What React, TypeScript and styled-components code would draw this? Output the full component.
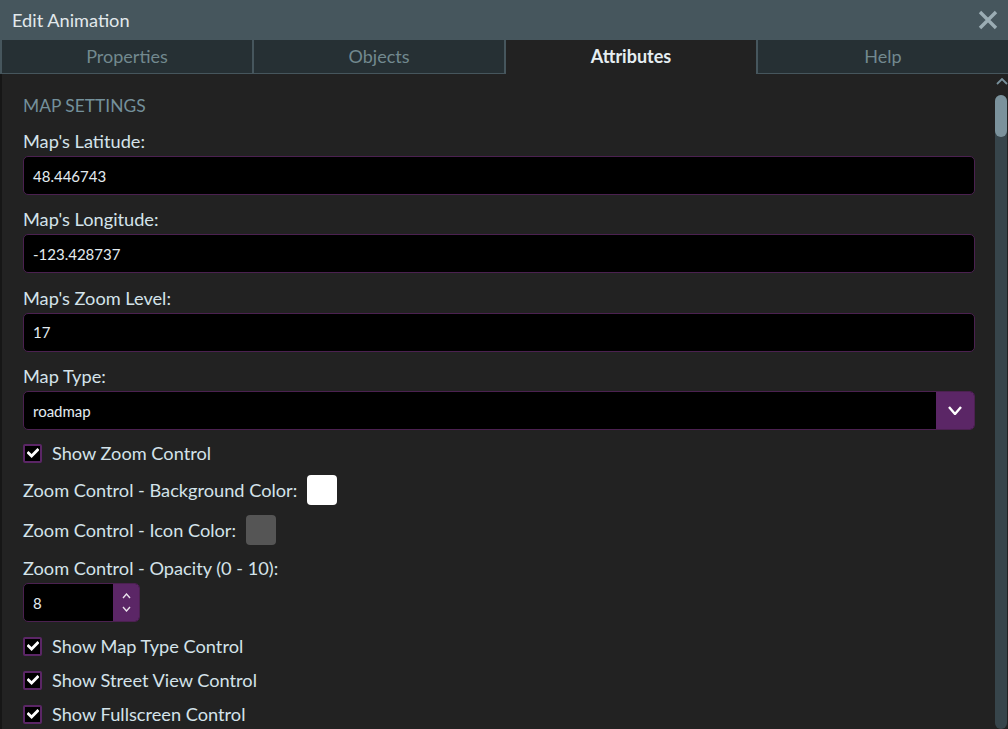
import React from "react";
import styled, { createGlobalStyle } from "styled-components";

const GlobalStyle = createGlobalStyle`
  html, body { margin: 0; padding: 0; background: #222222; overflow: hidden; }
  * { box-sizing: border-box; }
  body { font-family: Lato, "Open Sans", sans-serif; }
`;

const Window = styled.div`
  width: 1008px;
  height: 729px;
  display: flex;
  flex-direction: column;
  background: #222222;
  overflow: hidden;
`;

const TitleBar = styled.div`
  height: 40px;
  flex: none;
  display: flex;
  align-items: center;
  justify-content: space-between;
  padding: 0 9px 0 12px;
  background: #46565d;
`;

const Title = styled.div`
  font-size: 18.2px;
  color: #e2e9ec;
`;

const CloseButton = styled.div`
  width: 22px;
  height: 22px;
  display: flex;
  align-items: center;
  justify-content: center;
  color: #9badb4;
`;

const TabBar = styled.div`
  height: 34px;
  flex: none;
  display: flex;
  align-items: flex-start;
  gap: 2px;
  padding-left: 2px;
  background: #46565d;
`;

const Tab = styled.div<{ $active?: boolean }>`
  flex: 1;
  height: ${(p) => (p.$active ? "34px" : "33px")};
  line-height: 33px;
  text-align: center;
  font-size: 18px;
  font-weight: ${(p) => (p.$active ? 700 : 400)};
  color: ${(p) => (p.$active ? "#e6eef2" : "#72898f")};
  background: ${(p) => (p.$active ? "#222222" : "#263034")};
`;

const Body = styled.div`
  flex: 1;
  display: flex;
  min-height: 0;
  overflow: hidden;
  border-left: 2px solid #161616;
`;

const Content = styled.div`
  flex: 1;
  padding: 20px 20px 0 21px;
  overflow: hidden;
  color: #d4e3ea;
  font-size: 18.2px;
`;

const Heading = styled.div`
  line-height: 24px;
  font-size: 17.4px;
  color: #74909b;
  text-transform: uppercase;
`;

const Field = styled.div<{ $first?: boolean }>`
  margin-top: ${(p) => (p.$first ? "11px" : "0")};
  margin-bottom: 12.4px;
`;

const FieldLabel = styled.div<{ $mt?: number }>`
  line-height: 24px;
  margin-top: ${(p) => p.$mt ?? 0}px;
  margin-bottom: 3px;
`;

const TextInput = styled.div`
  height: 39px;
  display: flex;
  align-items: center;
  padding: 0 9px;
  background: #000;
  border: 1px solid #4b2150;
  border-radius: 5px;
  font-size: 15px;
  color: #e4ecf0;
`;

const SelectBox = styled.div`
  height: 39px;
  display: flex;
  background: #000;
  border: 1px solid #4b2150;
  border-radius: 5px;
  overflow: hidden;
`;

const SelectValue = styled.div`
  flex: 1;
  display: flex;
  align-items: center;
  padding: 0 9px;
  font-size: 15px;
  color: #e4ecf0;
`;

const SelectButton = styled.div`
  width: 38px;
  display: flex;
  align-items: center;
  justify-content: center;
  background: #5b2666;
  color: #ffffff;
`;

const CheckRow = styled.div<{ $mt?: number }>`
  height: 34px;
  margin-top: ${(p) => p.$mt ?? 0}px;
  display: flex;
  align-items: center;
  gap: 10px;
`;

const CheckBox = styled.div`
  width: 19px;
  height: 19px;
  flex: none;
  display: flex;
  align-items: center;
  justify-content: center;
  background: #000;
  border: 2px solid #5b2666;
  border-radius: 2px;
  color: #ffffff;
`;

const ColorRow = styled.div`
  height: 40px;
  display: flex;
  align-items: center;
  gap: 10px;
`;

const Swatch = styled.div<{ $color: string }>`
  width: 30px;
  height: 30px;
  border-radius: 4px;
  background: ${(p) => p.$color};
`;

const NumberBox = styled.div`
  width: 117px;
  height: 39px;
  display: flex;
  background: #000;
  border: 1px solid #4b2150;
  border-radius: 5px;
  overflow: hidden;
`;

const NumberValue = styled.div`
  flex: 1;
  display: flex;
  align-items: center;
  padding: 0 9px;
  font-size: 15px;
  color: #e4ecf0;
`;

const Spinner = styled.div`
  width: 26px;
  display: flex;
  flex-direction: column;
  align-items: center;
  justify-content: center;
  gap: 7px;
  background: #5b2666;
  color: #e8e0ea;
`;

const ScrollBar = styled.div`
  width: 13px;
  flex: none;
  display: flex;
  flex-direction: column;
  align-items: center;
  padding-top: 4px;
`;

const ScrollArrow = styled.div`
  height: 8px;
  margin-bottom: 9px;
  color: #78909c;
  display: flex;
`;

const Track = styled.div`
  width: 12px;
  flex: 1;
  margin-right: 1px;
  background: #37454b;
  border-radius: 6px;
`;

const Thumb = styled.div`
  height: 42px;
  background: #7b929c;
  border-radius: 6px;
`;

const Check = () => (
  <svg width="12" height="10" viewBox="0 0 12 10">
    <path d="M1.5 5 L4.6 8 L10.5 2" fill="none" stroke="currentColor" strokeWidth="2.8" strokeLinecap="square" />
  </svg>
);

const Chevron = ({ up, w, h, sw }: { up?: boolean; w: number; h: number; sw: number }) => (
  <svg width={w} height={h} viewBox={`0 0 ${w} ${h}`}>
    <path
      d={up ? `M1 ${h - 1} L${w / 2} 1 L${w - 1} ${h - 1}` : `M1 1 L${w / 2} ${h - 1} L${w - 1} 1`}
      fill="none"
      stroke="currentColor"
      strokeWidth={sw}
    />
  </svg>
);

const CheckItem = ({ label, mt }: { label: string; mt?: number }) => (
  <CheckRow $mt={mt}>
    <CheckBox>
      <Check />
    </CheckBox>
    <span>{label}</span>
  </CheckRow>
);

export default function App() {
  return (
    <>
      <GlobalStyle />
      <Window>
        <TitleBar>
          <Title>Edit Animation</Title>
          <CloseButton>
            <svg width="20" height="20" viewBox="0 0 20 20">
              <path d="M2 2 L18 18 M18 2 L2 18" stroke="currentColor" strokeWidth="3.4" />
            </svg>
          </CloseButton>
        </TitleBar>
        <TabBar>
          <Tab>Properties</Tab>
          <Tab>Objects</Tab>
          <Tab $active>Attributes</Tab>
          <Tab>Help</Tab>
        </TabBar>
        <Body>
          <Content>
            <Heading>Map Settings</Heading>
            <Field $first>
              <FieldLabel>Map's Latitude:</FieldLabel>
              <TextInput>48.446743</TextInput>
            </Field>
            <Field>
              <FieldLabel>Map's Longitude:</FieldLabel>
              <TextInput>-123.428737</TextInput>
            </Field>
            <Field>
              <FieldLabel>Map's Zoom Level:</FieldLabel>
              <TextInput>17</TextInput>
            </Field>
            <div>
              <FieldLabel>Map Type:</FieldLabel>
              <SelectBox>
                <SelectValue>roadmap</SelectValue>
                <SelectButton>
                  <Chevron w={14} h={9} sw={2.4} />
                </SelectButton>
              </SelectBox>
            </div>
            <CheckItem label="Show Zoom Control" mt={6} />
            <ColorRow>
              <span>Zoom Control - Background Color:</span>
              <Swatch $color="#ffffff" />
            </ColorRow>
            <ColorRow>
              <span>Zoom Control - Icon Color:</span>
              <Swatch $color="#555555" />
            </ColorRow>
            <FieldLabel $mt={6}>Zoom Control - Opacity (0 - 10):</FieldLabel>
            <NumberBox>
              <NumberValue>8</NumberValue>
              <Spinner>
                <Chevron up w={9} h={6} sw={1.4} />
                <Chevron w={9} h={6} sw={1.4} />
              </Spinner>
            </NumberBox>
            <CheckItem label="Show Map Type Control" mt={7} />
            <CheckItem label="Show Street View Control" />
            <CheckItem label="Show Fullscreen Control" />
          </Content>
          <ScrollBar>
            <ScrollArrow>
              <Chevron up w={12} h={7} sw={1.8} />
            </ScrollArrow>
            <Track>
              <Thumb />
            </Track>
          </ScrollBar>
        </Body>
      </Window>
    </>
  );
}
